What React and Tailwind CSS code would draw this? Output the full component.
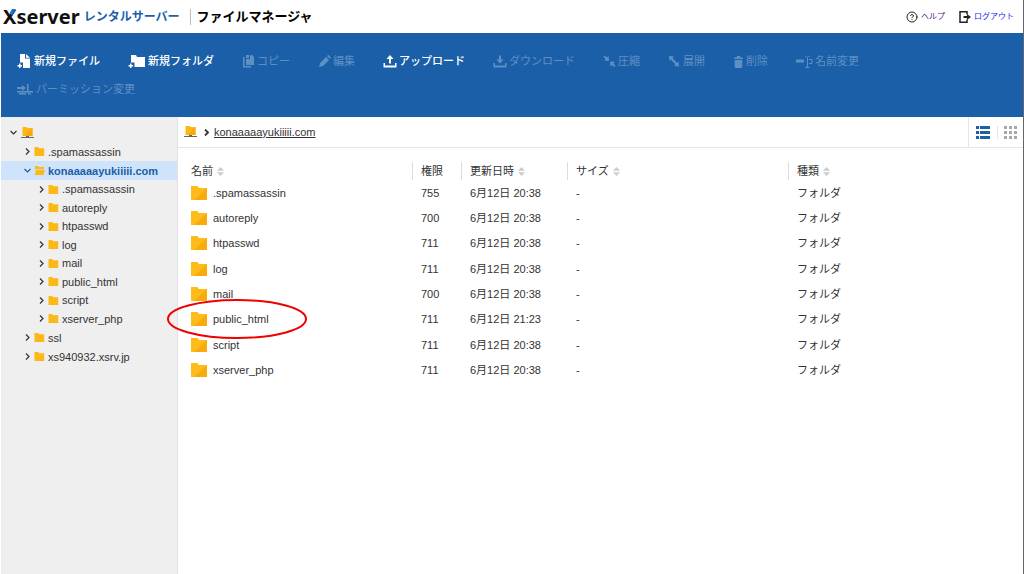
import { CircleHelp } from 'lucide-react';

const TREE = [
  { name: '.spamassassin' },
  {
    name: 'konaaaaayukiiiii.com',
    open: true,
    children: ['.spamassassin', 'autoreply', 'htpasswd', 'log', 'mail', 'public_html', 'script', 'xserver_php'],
  },
  { name: 'ssl' },
  { name: 'xs940932.xsrv.jp' },
];

const FILES = [
  { name: '.spamassassin', mode: '755', date: '6月12日 20:38' },
  { name: 'autoreply', mode: '700', date: '6月12日 20:38' },
  { name: 'htpasswd', mode: '711', date: '6月12日 20:38' },
  { name: 'log', mode: '711', date: '6月12日 20:38' },
  { name: 'mail', mode: '700', date: '6月12日 20:38' },
  { name: 'public_html', mode: '711', date: '6月12日 21:23', marked: true },
  { name: 'script', mode: '711', date: '6月12日 20:38' },
  { name: 'xserver_php', mode: '711', date: '6月12日 20:38' },
];

const NewFileIcon = () => (
  <svg className="h-4 w-[15px]" viewBox="0 0 15 16" fill="currentColor">
    <path d="M3 1h5v4.500h5V15H6V9.500H3z" />
    <path d="M9 1l4 3.700H9z" />
    <path d="M2 10.500h1.500V12H5v1.500H3.500V15H2v-1.500H.5V12H2z" />
  </svg>
);

const NewFolderIcon = () => (
  <svg className="h-4 w-[18px]" viewBox="0 0 18 16" fill="currentColor">
    <path d="M3 2h5l1 2h8v10H6.500V9.500H3z" />
    <path d="M2 10.500h1.500V12H5v1.500H3.500V15H2v-1.500H.5V12H2z" />
  </svg>
);

const CopyIcon = () => (
  <svg className="h-4 w-[13px]" viewBox="0 0 13 16" fill="currentColor">
    <path d="M1 4h1.500v9H9v1.500H1z" />
    <path d="M4 2h3v3H4zM8 2h2l2 2v8H4V6h4z" />
  </svg>
);

const EditIcon = () => (
  <svg className="h-4 w-[13px]" viewBox="0 0 13 16" fill="currentColor">
    <path d="M1 14l1-4 6-6 3 3-6 6zM9 3l1.300-1.200 2.600 2.600L11.700 5.800z" />
  </svg>
);

const UploadIcon = () => (
  <svg className="h-4 w-[14px]" viewBox="0 0 14 16" fill="currentColor">
    <path d="M7 2l3.500 4H8v4.500H6V6H3.500z" />
    <path d="M.5 10H2v2.500h10V10h1.500v4.500H.5z" />
  </svg>
);

const DownloadIcon = () => (
  <svg className="h-4 w-[14px]" viewBox="0 0 14 16" fill="currentColor">
    <path d="M6 2.500h2v4h2.500L7 10.500 3.500 6.500H6z" />
    <path d="M.5 10H2v2.500h10V10h1.500v4.500H.5z" />
  </svg>
);

const CompressIcon = () => (
  <svg className="h-4 w-[13px]" viewBox="0 0 13 16" fill="currentColor">
    <path d="M1.500 2.500l2.500 2 1.500-1.500.5 5-5-.5L2.500 6 .5 3.500z" />
    <path d="M11.500 14l-2.500-2-1.500 1.500-.5-5 5 .5-1.500 1.500 2 2.500z" />
  </svg>
);

const ExtractIcon = () => (
  <svg className="h-4 w-[13px]" viewBox="0 0 13 16" fill="currentColor">
    <path d="M1 3l5 .5L4.500 5l4.500 5 1.500-1.500.5 5-5-.5L7.500 11.500 3 6.500 1.500 8z" />
  </svg>
);

const TrashIcon = () => (
  <svg className="h-4 w-[11px]" viewBox="0 0 11 16" fill="currentColor">
    <path d="M1 4.500h2.800V3h3.400v1.500H10V6H1z" />
    <path d="M1.700 7h7.600v7l-1 1H2.700l-1-1z" />
  </svg>
);

const RenameIcon = () => (
  <svg className="h-4 w-[17px]" viewBox="0 0 17 16" fill="none" stroke="currentColor">
    <path d="M0 8h8" strokeWidth="3" />
    <path d="M9.500 3.500h1l1 1 1-1h1M9.500 14.500h4M11.500 4.500v10M13 6.500h3v4h-3" />
  </svg>
);

const PermissionIcon = () => (
  <svg className="h-4 w-[17px]" viewBox="0 0 17 16" fill="currentColor">
    <path d="M0 6h5V4l4 3-4 3V8H0zM10 3h1.500v7H16v1.500H0V10h10z" />
    <path d="M2 12h7v1.500H2zM11 11l4 2.500h-4z" />
  </svg>
);

const ACTIONS = [
  { label: '新規ファイル', Icon: NewFileIcon, enabled: true },
  { label: '新規フォルダ', Icon: NewFolderIcon, enabled: true },
  { label: 'コピー', Icon: CopyIcon },
  { label: '編集', Icon: EditIcon },
  { label: 'アップロード', Icon: UploadIcon, enabled: true },
  { label: 'ダウンロード', Icon: DownloadIcon },
  { label: '圧縮', Icon: CompressIcon },
  { label: '展開', Icon: ExtractIcon },
  { label: '削除', Icon: TrashIcon },
  { label: '名前変更', Icon: RenameIcon },
  { label: 'パーミッション変更', Icon: PermissionIcon },
];

const LogoutIcon = () => (
  <svg className="h-3 w-3" viewBox="0 0 12 12" fill="none" stroke="#222222" strokeWidth="1.500">
    <path d="M8 3.500V.8H1v10.400h7V8.500" />
    <path d="M4.500 6H9" strokeWidth="2" />
    <path d="M8 3l4 3-4 3z" fill="#222222" stroke="none" />
  </svg>
);

const ServerIcon = () => (
  <svg className="h-3 w-[13px] shrink-0" viewBox="0 0 13 12">
    <path d="M1.500 0h4l1 1h5v8h-10z" fill="#fcb814" />
    <path d="M11.500 1v8h-8z" fill="#f9a90c" />
    <path d="M0 10h13v1H0z" fill="#666666" />
    <path d="M5 9h3v1H5z" fill="#666666" />
  </svg>
);

const SmallFolder = ({ open }) => (
  <svg className="h-[9px] w-[11px] shrink-0" viewBox="0 0 11 9" fill="#fcb814">
    {open ? <path d="M1 0h3l1 1h5v2H2L1 6zM2.500 3.700H11L9.500 9H.5z" /> : <path d="M.5 0h3.700l1 1.200h5V9H.5z" />}
  </svg>
);

const LargeFolder = () => (
  <svg className="h-[14px] w-4 shrink-0" viewBox="0 0 16 14">
    <path d="M0 0h6.500l1.500 2h8v12H0z" fill="#fdbc1a" />
    <path d="M16 2v12H3z" fill="#f9ab0e" />
  </svg>
);

const Chevron = ({ down, bold }) => (
  <svg
    className="h-[7px] w-[7px] shrink-0"
    viewBox="0 0 7 7"
    fill="none"
    stroke="currentColor"
    strokeWidth={bold ? 1.800 : 1.200}
  >
    <path d={down ? 'M.5 2l3 3 3-3' : 'M2 .5l3 3-3 3'} />
  </svg>
);

const SortIcon = () => (
  <svg className="h-[9px] w-[7px]" viewBox="0 0 7 9" fill="#cccccc">
    <path d="M3.500 0L7 3.700H0zM0 5.300h7L3.500 9z" />
  </svg>
);

const Header = () => (
  <header className="flex h-[33px] items-center bg-white pr-[9px] pl-[2px]">
    <div className="flex items-center whitespace-nowrap">
      <span className="relative font-['Noto_Sans'] text-[20px] leading-6 font-bold text-[#111111]">
        Xserver
        <svg className="absolute top-0 left-0 h-6 w-[14px]" viewBox="0 0 14 24" fill="#1f6fd0">
          <path d="M9 4h4l-4 6.500-2.500-2z" />
        </svg>
      </span>
      <span className="ml-1 text-[12px] font-bold text-[#1c5fa8]">レンタルサーバー</span>
    </div>
    <h1 className="ml-[10px] border-l border-[#bbbbbb] pl-[6px] text-[13px] leading-4 font-bold whitespace-nowrap text-black">
      ファイルマネージャ
    </h1>
    <nav className="ml-auto flex items-center gap-[14px] text-[8px] leading-3">
      <a href="#help" className="flex items-center gap-[3px] text-[#551a8b]">
        <CircleHelp className="h-3 w-3 text-[#222222]" />
        ヘルプ
      </a>
      <a href="#logout" className="flex items-center gap-[3px] text-[#2222ee]">
        <LogoutIcon />
        ログアウト
      </a>
    </nav>
  </header>
);

const Toolbar = () => (
  <div className="flex min-h-[84px] flex-wrap content-start gap-x-[28px] bg-[#1b5fa8] pt-[14px] pr-6 pl-4">
    {ACTIONS.map(({ label, Icon, enabled }) => (
      <button
        key={label}
        type="button"
        disabled={!enabled}
        className={`flex h-7 items-center gap-[2px] text-[11px] whitespace-nowrap ${
          enabled ? 'font-medium text-white' : 'text-[#5f90c4]'
        }`}
      >
        <Icon />
        {label}
      </button>
    ))}
  </div>
);

const Sidebar = () => (
  <aside className="w-[177px] shrink-0 border-r border-[#e2e2e2] bg-[#efefef] pt-[6px]">
    <button type="button" aria-label="サーバー" className="flex h-[19px] items-center gap-1 pl-[9px]">
      <Chevron down />
      <ServerIcon />
    </button>
    <ul>
      {TREE.map((node) => (
        <li key={node.name}>
          <button
            type="button"
            className={`flex h-[19px] w-full items-center gap-[3px] pl-[23px] ${
              node.open ? 'bg-[#cfe4fb] font-bold text-[#1b5fa8]' : ''
            }`}
          >
            <Chevron down={node.open} />
            <SmallFolder open={node.open} />
            <span>{node.name}</span>
          </button>
          {node.children && (
            <ul>
              {node.children.map((child) => (
                <li key={child} className="h-[18px] even:h-[19px]">
                  <button type="button" className="flex h-full w-full items-center gap-[3px] pl-[37px]">
                    <Chevron />
                    <SmallFolder />
                    <span>{child}</span>
                  </button>
                </li>
              ))}
            </ul>
          )}
        </li>
      ))}
    </ul>
  </aside>
);

const ListViewIcon = () => (
  <svg className="h-[13px] w-[14px]" viewBox="0 0 14 13" fill="#1b5fa8">
    <path d="M0 0h3v3H0zM4 0h10v3H4zM0 5h3v3H0zM4 5h10v3H4zM0 10h3v3H0zM4 10h10v3H4z" />
  </svg>
);

const GridViewIcon = () => (
  <svg className="h-[13px] w-[13px]" viewBox="0 0 13 13" fill="#a8a8a8">
    <path d="M0 0h3v3H0zM5 0h3v3H5zM10 0h3v3h-3zM0 5h3v3H0zM5 5h3v3H5zM10 5h3v3h-3zM0 10h3v3H0zM5 10h3v3H5zM10 10h3v3h-3z" />
  </svg>
);

const PathBar = () => (
  <div className="flex h-[31px] items-center border-b border-[#e6e6e6] pl-[6px]">
    <ServerIcon />
    <span className="mr-1 ml-[6px]">
      <Chevron bold />
    </span>
    <a href="#konaaaaayukiiiii.com" className="underline">
      konaaaaayukiiiii.com
    </a>
    <div className="ml-auto flex h-full items-center border-l border-[#e6e6e6]">
      <button type="button" aria-label="リスト表示" className="px-[7px]">
        <ListViewIcon />
      </button>
      <button type="button" aria-label="アイコン表示" className="border-l border-[#e6e6e6] px-[6px]">
        <GridViewIcon />
      </button>
    </div>
  </div>
);

const HeadCell = ({ label, sortable, first }) => (
  <th className="p-0 font-normal">
    <div className={`flex h-[18px] items-center gap-1 ${first ? 'pl-[13px]' : 'border-l border-[#dddddd] pl-2'}`}>
      {label}
      {sortable && <SortIcon />}
    </div>
  </th>
);

const FileTable = () => (
  <table className="mt-[14px] w-full table-fixed text-left">
    <colgroup>
      <col className="w-[234px]" />
      <col className="w-[49px]" />
      <col className="w-[106px]" />
      <col className="w-[221px]" />
      <col />
    </colgroup>
    <thead>
      <tr>
        <HeadCell label="名前" sortable first />
        <HeadCell label="権限" />
        <HeadCell label="更新日時" sortable />
        <HeadCell label="サイズ" sortable />
        <HeadCell label="種類" sortable />
      </tr>
    </thead>
    <tbody>
      {FILES.map((file) => (
        <tr key={file.name} className="h-[25px] nth-[3n]:h-[26px]">
          <td className="relative p-0 pl-[13px]">
            <div className="flex items-center gap-[6px]">
              <LargeFolder />
              <span>{file.name}</span>
            </div>
            {file.marked && (
              <svg
                className="pointer-events-none absolute -top-2 -left-[11px] z-10 h-[42px] w-[140px]"
                viewBox="0 0 140 42"
                fill="none"
              >
                <ellipse cx="70" cy="21" rx="69" ry="19" stroke="#f00000" strokeWidth="2" />
              </svg>
            )}
          </td>
          <td className="p-0 pl-[9px]">{file.mode}</td>
          <td className="p-0 pl-[9px]">{file.date}</td>
          <td className="p-0 pl-[9px]">-</td>
          <td className="p-0 pl-[9px]">フォルダ</td>
        </tr>
      ))}
    </tbody>
  </table>
);

const App = () => (
  <div className="flex min-h-screen flex-col border-r border-l border-r-[#666666] border-l-white bg-white font-['Liberation_Sans','Noto_Sans_CJK_JP',sans-serif] text-[11px] leading-[18px] text-[#333333]">
    <Header />
    <Toolbar />
    <div className="flex flex-1">
      <Sidebar />
      <main className="min-w-0 flex-1">
        <PathBar />
        <FileTable />
      </main>
    </div>
  </div>
);

export default App;
